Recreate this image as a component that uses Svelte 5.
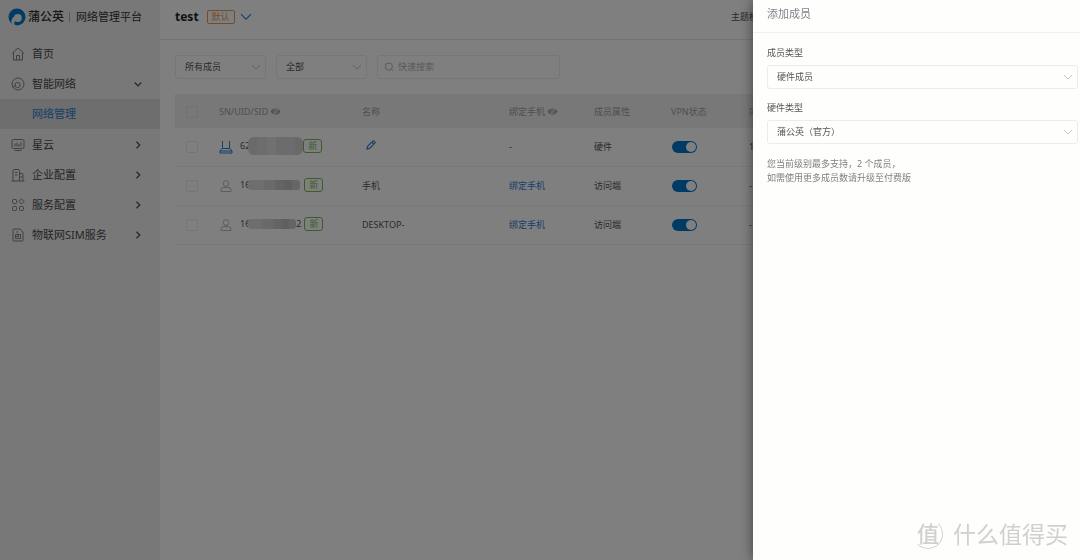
<script lang="ts">
  let memberScope = $state("所有成员");
  let status = $state("全部");
  let keyword = $state("");
  let memberType = $state("硬件成员");
  let hardwareType = $state("蒲公英（官方）");

  const menu = [
    { icon: "home", label: "首页", arrow: "" },
    { icon: "network", label: "智能网络", arrow: "down", child: "网络管理" },
    { icon: "cloud", label: "星云", arrow: "right" },
    { icon: "company", label: "企业配置", arrow: "right" },
    { icon: "service", label: "服务配置", arrow: "right" },
    { icon: "sim", label: "物联网SIM服务", arrow: "right" }
  ];

  let members = $state([
    { router: true, sn: "62", tail: "", name: "", phone: false, type: "硬件", vpn: true, ip: "1" },
    { router: false, sn: "16", tail: "", name: "手机", phone: true, type: "访问端", vpn: true, ip: "-" },
    { router: false, sn: "16", tail: "2", name: "DESKTOP-", phone: true, type: "访问端", vpn: true, ip: "-" }
  ]);
</script>

{#snippet chevron()}
  <svg class="chevron" viewBox="0 0 10 10"><path d="M1 3l4 4 4-4" /></svg>
{/snippet}

{#snippet hiddenEye()}
  <svg class="eye" viewBox="0 0 12 10">
    <path d="M0.5 5C2 2.4 4 1.6 6 1.6S10 2.4 11.500 5C10 7.600 8 8.400 6 8.400S2 7.600 0.500 5z" fill="currentColor" />
    <circle cx="6" cy="5" r="2" fill="none" stroke="#f0f0f0" stroke-width="0.8" />
    <path d="M3 9L9.500 1" stroke="#f0f0f0" stroke-width="1" />
  </svg>
{/snippet}

<div class="layout">
  <aside class="sidebar">
    <div class="brand">
      <svg class="logo" viewBox="0 0 18 18">
        <circle cx="9" cy="9" r="8.500" fill="#0077cc" />
        <circle cx="9.800" cy="10" r="4" fill="#f0f0f0" />
        <path d="M5.900 8.800C4.300 9.800 3.300 11.800 3.400 14.800L5 16.800L7.600 17.800C6.500 16.800 6 15.300 6.300 14.300C6.500 13.600 7.200 13 8 13z" fill="#f0f0f0" />
      </svg>
      <strong>蒲公英</strong>
      <span class="divider"></span>
      <span class="platform">网络管理平台</span>
    </div>
    <nav>
      {#each menu as item}
        <a class="item" href="#{item.icon}">
          <svg class="menu-icon" viewBox="0 0 14 14">
            {#if item.icon === "home"}
              <path d="M1 6.500L7 1l6 5.500M2.500 5.500V13h9V5.500M5.500 13V8.500h3V13" />
            {:else if item.icon === "network"}
              <circle cx="7" cy="7" r="6" />
              <circle cx="6.500" cy="8" r="2.600" />
              <path d="M1.500 10.500C2.500 10.500 3.500 9.500 3.900 8" />
            {:else if item.icon === "cloud"}
              <rect x="1" y="1.500" width="12" height="9" rx="1.500" />
              <path d="M4 5.500v3M6 4.500v4M8 6v2.500M10 4v4.500M3.500 12.500h7" />
            {:else if item.icon === "company"}
              <path d="M2 13V2.500Q2 1.500 3 1.500h4.500q1 0 1 1V13M8.500 5.500h2.500q1 0 1 1V13M0.500 13h13M4 4.500h2.500M4 7h2.500M10.200 8v2" />
            {:else if item.icon === "service"}
              <rect x="1.500" y="1.500" width="4" height="4" rx="1" />
              <rect x="1.500" y="8.500" width="4" height="4" rx="1" />
              <rect x="8.500" y="8.500" width="4" height="4" rx="1" />
              <path d="M10.500 0.900l2.600 2.600-2.600 2.600-2.600-2.600z" />
            {:else}
              <path d="M3 1h6l3 3v8q0 1-1 1H3q-1 0-1-1V2q0-1 1-1z" />
              <path d="M4.500 6.500h5v4h-5zM4.500 8.500h3V6.500M5 4h2" />
            {/if}
          </svg>
          <span>{item.label}</span>
          {#if item.arrow}
            <svg class="arrow {item.arrow}" viewBox="0 0 8 8"><path d="M2.500 0.800L5.800 4 2.500 7.200" /></svg>
          {/if}
        </a>
        {#if item.child}
          <div class="submenu">
            <a class="item active" href="#manage">{item.child}</a>
          </div>
        {/if}
      {/each}
    </nav>
  </aside>

  <main>
    <header class="topbar">
      <h1>test</h1>
      <span class="tag default">默认</span>
      <button class="switch-net" aria-label="test">
        <svg viewBox="0 0 12 8"><path d="M1 1.200l5 5 5-5" /></svg>
      </button>
      <div class="actions">主题模式</div>
    </header>

    <div class="filters">
      <div class="select">
        <select bind:value={memberScope} aria-label="所有成员">
          <option>所有成员</option>
        </select>
        {@render chevron()}
      </div>
      <div class="select">
        <select bind:value={status} aria-label="全部">
          <option>全部</option>
        </select>
        {@render chevron()}
      </div>
      <label class="search">
        <svg viewBox="0 0 10 10"><circle cx="4.800" cy="4.600" r="3.600" /><path d="M7.300 7.300L9 9" /></svg>
        <input type="text" bind:value={keyword} placeholder="快速搜索" />
      </label>
    </div>

    <table>
      <colgroup>
        <col class="c-check" />
        <col class="c-sn" />
        <col class="c-name" />
        <col class="c-phone" />
        <col class="c-type" />
        <col class="c-vpn" />
        <col />
      </colgroup>
      <thead>
        <tr>
          <th class="check"><input type="checkbox" aria-label="SN/UID/SID" /></th>
          <th><span class="head">SN/UID/SID{@render hiddenEye()}</span></th>
          <th>名称</th>
          <th><span class="head">绑定手机{@render hiddenEye()}</span></th>
          <th>成员属性</th>
          <th>VPN状态</th>
          <th>内</th>
        </tr>
      </thead>
      <tbody>
        {#each members as member}
          <tr>
            <td class="check"><input type="checkbox" aria-label={member.sn} /></td>
            <td>
              <div class="sn">
                {#if member.router}
                  <svg class="device router" viewBox="0 0 14 14">
                    <path d="M3.500 1v7.500M10.500 1v7.500M3 8.500h8l2 2.500v2H1v-2zM1 11h12" />
                  </svg>
                {:else}
                  <svg class="device" viewBox="0 0 14 14">
                    <circle cx="7" cy="4.500" r="2.800" />
                    <path d="M2 12.500V11q0-2.500 3-2.500h4q3 0 3 2.500v1.500z" />
                  </svg>
                {/if}
                <div class="sn-text">
                  <span>{member.sn}</span>
                  <span class="mosaic" class:tall={member.router} class:short={member.tail}></span>
                  {#if member.tail}<span>{member.tail}</span>{/if}
                  <span class="tag new">新</span>
                </div>
              </div>
            </td>
            <td>
              {#if member.name}
                {member.name}
              {:else}
                <button class="edit" aria-label="名称">
                  <svg viewBox="0 0 10 10"><path d="M1 9l0.600-2.600L6.800 1.200q0.700-0.600 1.400 0l0.600 0.600q0.600 0.700 0 1.400L3.600 8.400zM5.800 2.200l2 2" /></svg>
                </button>
              {/if}
            </td>
            <td>
              {#if member.phone}<a href="#bind">绑定手机</a>{:else}-{/if}
            </td>
            <td>{member.type}</td>
            <td><input class="toggle" type="checkbox" role="switch" aria-label="VPN状态" bind:checked={member.vpn} /></td>
            <td>{member.ip}</td>
          </tr>
        {/each}
      </tbody>
    </table>
  </main>
</div>

<div class="mask"></div>

<section class="drawer">
  <h2>添加成员</h2>
  <form>
    <label for="member-type">成员类型</label>
    <div class="select">
      <select id="member-type" bind:value={memberType}>
        <option>硬件成员</option>
      </select>
      {@render chevron()}
    </div>
    <label for="hardware-type">硬件类型</label>
    <div class="select">
      <select id="hardware-type" bind:value={hardwareType}>
        <option>蒲公英（官方）</option>
      </select>
      {@render chevron()}
    </div>
    <p>您当前级别最多支持，2 个成员，<br />如需使用更多成员数请升级至付费版</p>
  </form>
  <div class="watermark">
    <span class="seal">值</span>
    <span>什么值得买</span>
  </div>
</section>

<style>
  :global(body) {
    font-family: "Noto Sans", "Noto Sans CJK SC", sans-serif;
    font-size: 9px;
    line-height: 14px;
    color: #555;
    background: #fff;
  }

  svg {
    display: block;
    flex: none;
    fill: none;
    stroke: currentColor;
  }

  a {
    color: #2b80d2;
    text-decoration: none;
  }

  button {
    padding: 0;
    border: none;
    background: none;
    color: #2b80d2;
    cursor: pointer;
  }

  .layout {
    display: flex;
    min-height: 100vh;
  }

  /* sidebar */
  .sidebar {
    width: 160px;
    flex: none;
    background: #f0f0f0;
  }

  .brand {
    display: flex;
    align-items: center;
    height: 33px;
    margin-bottom: 6px;
    padding-left: 8px;
    color: #333;
  }

  .logo {
    width: 18px;
    height: 18px;
    margin-right: 2px;
    stroke: none;
  }

  .brand strong {
    font-size: 12px;
    font-weight: 500;
  }

  .divider {
    width: 1px;
    height: 10px;
    margin: 0 6px 0 5px;
    background: #b0b0b0;
  }

  .platform {
    font-size: 11px;
  }

  .item {
    display: flex;
    align-items: center;
    height: 30px;
    padding: 0 18px 0 11px;
    font-size: 11px;
    color: #4a4a4a;
  }

  .menu-icon {
    width: 14px;
    height: 14px;
    margin-right: 7px;
    color: #808080;
  }

  .arrow {
    width: 8px;
    height: 8px;
    margin-left: auto;
    stroke-width: 1.2;
  }

  .arrow.down {
    transform: rotate(90deg);
  }

  .submenu {
    padding-bottom: 1px;
  }

  .item.active {
    padding-left: 32px;
    background: #dcdcdc;
    color: #2b80d2;
  }

  /* content */
  main {
    flex: 1;
    min-width: 0;
  }

  .topbar {
    display: flex;
    align-items: center;
    height: 33px;
    padding: 0 0 6px 15px;
    border-bottom: 1px solid #e8e8e8;
  }

  h1 {
    margin: 0;
    font-size: 12px;
    font-weight: 700;
    color: #222;
  }

  .tag {
    box-sizing: border-box;
    height: 14px;
    line-height: 12px;
    padding: 0 4px;
    border: 1px solid currentColor;
    border-radius: 2px;
  }

  .default {
    margin: 0 5px 0 8px;
    color: #e8964e;
  }

  .switch-net svg {
    width: 12px;
    height: 8px;
    stroke-width: 1.2;
  }

  .actions {
    width: 349px;
    margin-left: auto;
  }

  .filters {
    display: flex;
    gap: 10px;
    padding: 15px;
  }

  .select {
    position: relative;
  }

  .filters .select {
    width: 91px;
  }

  select {
    appearance: none;
    display: block;
    box-sizing: border-box;
    width: 100%;
    height: 24px;
    padding: 0 20px 0 9px;
    border: 1px solid #ececee;
    border-radius: 3px;
    background: transparent;
    font: inherit;
    color: inherit;
  }

  .chevron {
    position: absolute;
    top: 7px;
    right: 5px;
    width: 10px;
    height: 10px;
    color: #c0c4cc;
    pointer-events: none;
  }

  .search {
    display: flex;
    align-items: center;
    gap: 4px;
    box-sizing: border-box;
    width: 183px;
    height: 24px;
    padding: 0 6px;
    border: 1px solid #ececee;
    border-radius: 3px;
    color: #b0b3b9;
  }

  .search svg {
    width: 10px;
    height: 10px;
  }

  .search input {
    flex: 1;
    min-width: 0;
    padding: 0;
    border: none;
    outline: none;
    background: none;
    font: inherit;
  }

  .search input::placeholder {
    color: #b0b3b9;
  }

  table {
    width: calc(100% - 15px);
    margin-left: 15px;
    table-layout: fixed;
    border-collapse: collapse;
  }

  .c-check {
    width: 34px;
  }

  .c-sn {
    width: 143px;
  }

  .c-name {
    width: 147px;
  }

  .c-phone {
    width: 85px;
  }

  .c-type {
    width: 77px;
  }

  .c-vpn {
    width: 78px;
  }

  th,
  td {
    box-sizing: border-box;
    height: 39px;
    padding: 0 0 0 10px;
    border-bottom: 1px solid #f0f0f0;
    text-align: left;
  }

  th {
    height: 33px;
    padding-top: 3px;
    background: #f0f0f0;
    font-weight: 400;
    color: #a0a0a0;
  }

  .head {
    display: flex;
    align-items: center;
    gap: 2px;
  }

  .eye {
    width: 11px;
    height: 9px;
    stroke: none;
  }

  .check input {
    appearance: none;
    display: block;
    box-sizing: border-box;
    width: 12px;
    height: 12px;
    margin: 0 0 0 1px;
    border: 1px solid #e8eaec;
    border-radius: 2px;
  }

  th.check input {
    border-color: #e0e2e4;
  }

  .sn {
    display: flex;
    align-items: center;
  }

  .sn-text {
    display: flex;
    align-items: center;
    padding-bottom: 2px;
  }

  .device {
    width: 14px;
    height: 14px;
    margin-right: 7px;
    color: #bababa;
  }

  .router {
    color: #2b80d2;
  }

  .mosaic {
    width: 52px;
    height: 10px;
    margin: 0 4px 0 -2px;
    border-radius: 3px;
    background: linear-gradient(90deg, #dcdcdc 0 30%, #d4d4d4 30% 52%, #c8c8c8 52% 70%, #c0c0c0 70% 85%, #cccccc 85%);
  }

  .mosaic.tall {
    width: 55px;
    height: 18px;
    margin-right: 0;
    border-radius: 6px;
    background: linear-gradient(90deg, #d4d4d4 0 16%, #dadada 16% 34%, #e2e2e2 34% 50%, #d8d8d8 50% 84%, #d2d2d2 84%);
  }

  .mosaic.short {
    width: 48px;
    margin-right: 0;
  }

  .new {
    border-radius: 3px;
    color: #72bc56;
  }

  .mosaic.short ~ .new {
    margin-left: 3px;
  }

  .edit svg {
    width: 10px;
    height: 10px;
    margin-left: 4px;
    stroke-width: 1.2;
  }

  .toggle {
    appearance: none;
    display: block;
    box-sizing: border-box;
    width: 25px;
    height: 12px;
    margin: 0 0 0 1px;
    padding: 1px;
    border-radius: 6px;
    background: #c0c4cc;
  }

  .toggle::before {
    content: "";
    display: block;
    width: 10px;
    height: 10px;
    border-radius: 50%;
    background: #fff;
  }

  .toggle:checked {
    background: #0077cc;
  }

  .toggle:checked::before {
    margin-left: auto;
  }

  .mask {
    position: fixed;
    inset: 0;
    background: rgba(0, 0, 0, 0.5);
  }

  /* drawer */
  .drawer {
    position: fixed;
    top: 0;
    right: 0;
    bottom: 0;
    display: flex;
    flex-direction: column;
    width: 327px;
    background: #fefefd;
    box-shadow: 0 0 12px rgba(0, 0, 0, 0.5);
  }

  h2 {
    margin: 0;
    padding: 6px 14px 11px;
    border-bottom: 1px solid #f0f0f0;
    font-size: 11px;
    line-height: 15px;
    font-weight: 400;
    color: #808388;
  }

  form {
    flex: 1;
    padding: 13px 2px 0 14px;
  }

  form label {
    display: block;
    margin-bottom: 5px;
  }

  form .select {
    margin-bottom: 12px;
  }

  form p {
    margin: 0;
    padding-top: 1px;
    color: #808080;
  }

  .watermark {
    display: flex;
    align-items: center;
    gap: 10px;
    padding: 0 11px 11px 160px;
    font-size: 23px;
    line-height: 30px;
    white-space: nowrap;
    color: #d0d0d0;
  }

  .seal {
    box-sizing: border-box;
    width: 30px;
    height: 30px;
    border: 1px solid;
    border-color: transparent #d0d0d0 #d0d0d0 transparent;
    border-radius: 50%;
    font-size: 22px;
    font-weight: 500;
    line-height: 26px;
    text-align: center;
  }
</style>
